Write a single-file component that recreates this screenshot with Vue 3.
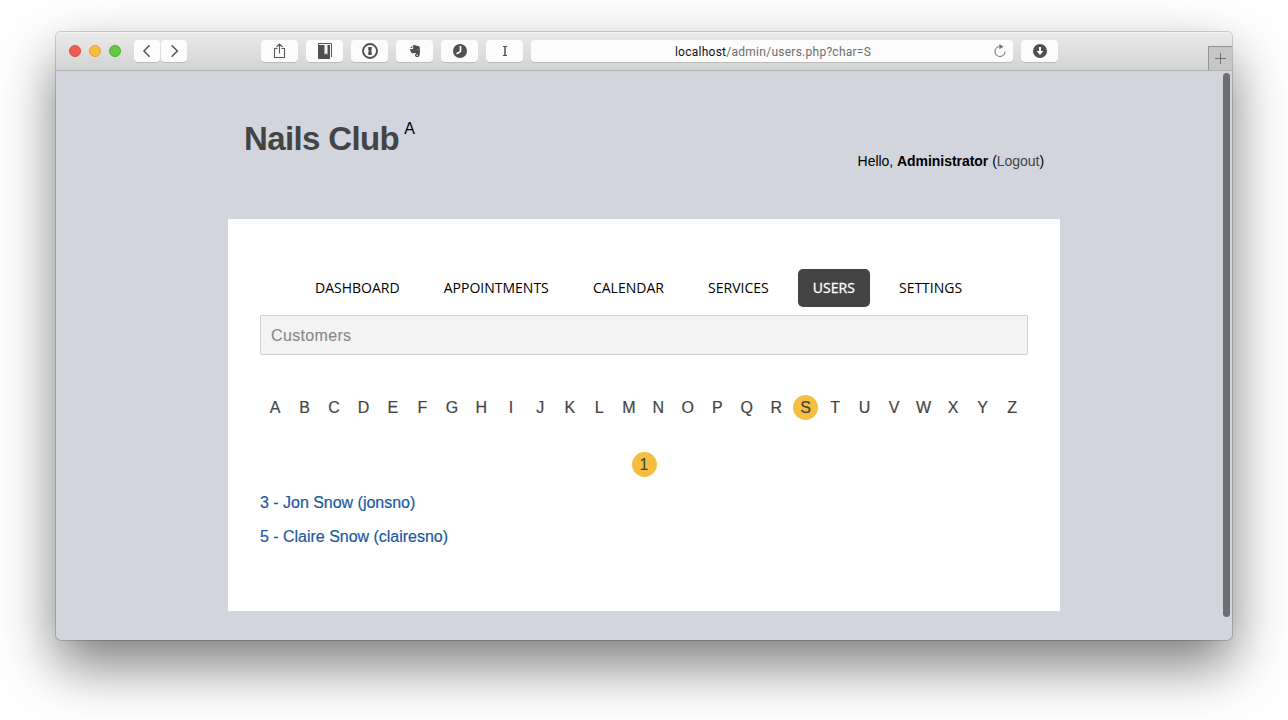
<script setup>
const nav = ['Dashboard', 'Appointments', 'Calendar', 'Services', 'Users', 'Settings']
const activeNav = 'Users'
const letters = 'ABCDEFGHIJKLMNOPQRSTUVWXYZ'.split('')
const activeLetter = 'S'
const users = [
  { id: 3, name: 'Jon Snow', login: 'jonsno' },
  { id: 5, name: 'Claire Snow', login: 'clairesno' },
]
</script>

<template>
  <div class="desktop">
    <div class="window">
      <header class="toolbar">
        <div class="lights">
          <span class="light red"></span>
          <span class="light yellow"></span>
          <span class="light green"></span>
        </div>
        <div class="history">
          <span class="btn arrow">
            <svg width="26" height="22" viewBox="0 0 26 22"><path d="M15.600 5.300 10 11l5.600 5.700" fill="none" stroke="#555" stroke-width="1.500" /></svg>
          </span>
          <span class="btn arrow">
            <svg width="26" height="22" viewBox="0 0 26 22"><path d="M10.700 5.300 16.300 11l-5.600 5.700" fill="none" stroke="#555" stroke-width="1.500" /></svg>
          </span>
        </div>
        <div class="tools">
          <span class="btn">
            <svg width="37" height="22" viewBox="0 0 37 22" fill="none" stroke="#5a5a5a" stroke-width="1.100">
              <path d="M16.500 8.500h-3v9h10v-9h-3M18.500 13.500V4M15.500 7l3-3 3 3" />
            </svg>
          </span>
          <span class="btn">
            <svg width="37" height="22" viewBox="0 0 37 22">
              <path d="M12 5h12v14H13.500a1.500 1.500 0 0 1-1.500-1.500z" fill="#505050" />
              <path d="M18.500 5h3v10l-1.500-1.700-1.500 1.700z" fill="#f4f4f4" />
              <path d="M12.500 5.500v-2h13V17" fill="none" stroke="#555" />
            </svg>
          </span>
          <span class="btn">
            <svg width="37" height="22" viewBox="0 0 37 22">
              <circle cx="19" cy="11" r="7" fill="none" stroke="#505050" stroke-width="1.900" />
              <path d="M17.300 7h3.400v3.300l-.8.700.8.700V15h-3.400v-3.300l.8-.7-.8-.7z" fill="#505050" />
            </svg>
          </span>
          <span class="btn">
            <svg width="37" height="22" viewBox="0 0 37 22">
              <path d="M17.200 5c1.500-.2 2.600 0 3 .7 1.200.1 2.900.2 3.200.8.700 1.600.7 5.500.3 8-.3 1.900-1 2.500-2.400 2.500-1.500 0-2.300-.8-2.300-1.800s.8-1.700 2.300-1.600v1c-.7 0-1 .2-1 .6s.3.600.8.600c.6 0 .8-.4.7-1.300-.3-1-2.300-.7-2.800-1.700-.3.600-1.500.7-2.600.4-1.400-.3-2.200-1.900-2.300-4.200h2.500c.4 0 .6-.2.600-.6z" fill="#505050" />
              <path d="M14.200 8 16.300 5.700V8z" fill="#505050" />
              <path d="M21 10c.3-.9 1.600-.8 1.600.3z" fill="#fff" />
            </svg>
          </span>
          <span class="btn">
            <svg width="37" height="22" viewBox="0 0 37 22">
              <circle cx="19" cy="11" r="7" fill="#505050" />
              <path d="M19.500 6v5.200q-1 1.300-4 2.500" fill="none" stroke="#fff" stroke-width="1.700" />
            </svg>
          </span>
          <span class="btn">
            <svg width="37" height="22" viewBox="0 0 37 22" fill="none" stroke="#505050">
              <path d="M17 6.500h4M17 15.500h4" /><path d="M19 6.500v9" stroke-width="1.500" />
            </svg>
          </span>
        </div>
        <div class="address">
          <span class="url"><b>localhost</b>/admin/users.php?char=S</span>
          <svg class="reload" width="14" height="16" viewBox="0 0 14 16">
            <path d="M6.500 3.500a5 5 0 1 0 5.500 5" fill="none" stroke="#777" stroke-width="1.100" />
            <path d="M6.300 1v5.200L10.500 3.700z" fill="#707070" />
          </svg>
        </div>
        <span class="btn download">
          <svg width="37" height="22" viewBox="0 0 37 22">
            <circle cx="19" cy="11" r="7" fill="#505050" />
            <path d="M18 7h2v4h2.400L19 15l-3.400-4H18z" fill="#fff" />
          </svg>
        </span>
        <span class="newtab">
          <svg width="23" height="23" viewBox="0 0 23 23"><path d="M6 11.500h11M11.500 6v11" stroke="#707070" /></svg>
        </span>
      </header>

      <main class="page">
        <div class="masthead">
          <div class="brand"><h1>Nails Club</h1><sup>A</sup></div>
          <p class="greeting">Hello, <strong>Administrator</strong> (<a>Logout</a>)</p>
        </div>
        <section class="panel">
          <nav class="nav">
            <a v-for="item in nav" :key="item" :class="{ active: item === activeNav }">{{ item.toUpperCase() }}</a>
          </nav>
          <div class="group"><span>Customers</span></div>
          <div class="letters">
            <a v-for="l in letters" :key="l"><span :class="{ dot: l === activeLetter }">{{ l }}</span></a>
          </div>
          <div class="pager"><span class="dot">1</span></div>
          <ul class="users">
            <li v-for="u in users" :key="u.id"><a>{{ u.id }} - {{ u.name }} ({{ u.login }})</a></li>
          </ul>
        </section>
        <span class="scrollbar"></span>
      </main>
    </div>
  </div>
</template>

<style>
body {
  background: #fff;
  overflow: hidden;
}
</style>

<style scoped>
.desktop {
  box-sizing: border-box;
  height: 720px;
  padding: 32px 56px 0;
  overflow: hidden;
  font-family: "Liberation Sans", Arial, sans-serif;
}
.window {
  width: 1176px;
  height: 608px;
  border-radius: 5px;
  background: #d2d5dd;
  box-shadow: 0 0 0 1px rgba(0, 0, 0, 0.17), 0 25px 55px rgba(0, 0, 0, 0.52);
}
.toolbar {
  box-sizing: border-box;
  display: flex;
  align-items: flex-start;
  height: 39px;
  padding: 8px 0 0 13px;
  border-bottom: 1px solid #b1b1b1;
  border-radius: 5px 5px 0 0;
  background: linear-gradient(#ebebeb, #d3d3d3);
  box-shadow: inset 0 1px #f5f5f5;
}
.lights {
  display: flex;
  gap: 8px;
  padding-top: 5px;
}
.light {
  box-sizing: border-box;
  width: 12px;
  height: 12px;
  border-radius: 50%;
}
.red { background: #ee5c54; border: 1px solid #dc4a45; }
.yellow { background: #f6be40; border: 1px solid #dfa23a; }
.green { background: #62cb43; border: 1px solid #4bad30; }
.history {
  display: flex;
  gap: 1px;
  margin-left: 13px;
}
.btn {
  width: 37px;
  height: 22px;
  border-radius: 4px;
  background: #fcfcfc;
  box-shadow: 0 1px rgba(0, 0, 0, 0.12);
}
.btn svg { display: block; }
.arrow { width: 26px; }
.tools {
  display: flex;
  gap: 8px;
  margin-left: 74px;
}
.address {
  display: flex;
  align-items: center;
  width: 482px;
  height: 22px;
  margin-left: 8px;
  border-radius: 4px;
  background: #fcfcfc;
  box-shadow: 0 1px rgba(0, 0, 0, 0.12);
}
.url {
  flex: 1;
  padding: 2px 0 0 22px;
  text-align: center;
  font: 12px/22px Roboto, sans-serif;
  letter-spacing: 0.26px;
  color: #6e6e6e;
}
.url b {
  font-weight: 400;
  color: #111;
}
.reload { margin-right: 6px; }
.download { margin-left: 8px; }
.newtab {
  box-sizing: border-box;
  width: 24px;
  height: 24px;
  margin: 6px 0 0 auto;
  border: solid #949494;
  border-width: 1px 0 0 1px;
  background: #c7c7c7;
}
.newtab svg { display: block; }
.page {
  position: relative;
  height: 569px;
}
.masthead {
  display: flex;
  justify-content: space-between;
  box-sizing: border-box;
  width: 832px;
  height: 148px;
  margin: 0 auto;
  padding: 0 16px;
}
.brand {
  display: flex;
  align-items: flex-start;
  padding-top: 48px;
}
h1 {
  margin: 0;
  font-size: 33px;
  line-height: 40px;
  letter-spacing: -0.62px;
  color: #444;
}
sup {
  margin-left: 5px;
  font-size: 16px;
  line-height: 19px;
  color: #000;
}
.greeting {
  margin: 81px 0 0;
  font-size: 14px;
  line-height: 18px;
  letter-spacing: -0.04px;
  color: #000;
}
.greeting a { color: #444; }
.panel {
  box-sizing: border-box;
  width: 832px;
  height: 392px;
  margin: 0 auto;
  padding: 50px 32px 0;
  background: #fff;
}
.nav {
  display: flex;
  gap: 14.150px;
  height: 38px;
  padding-left: 40px;
}
.nav a {
  padding: 0 15px;
  border-radius: 5px;
  font: 14px/38px "Open Sans", sans-serif;
  color: #000;
}
.nav .active {
  background: #444;
  color: #fff;
  -webkit-text-stroke: 0.3px #fff;
}
.group {
  box-sizing: border-box;
  height: 40px;
  margin-top: 8px;
  padding-left: 10px;
  border: 1px solid #d0d0d0;
  border-radius: 1px;
  background: #f3f3f3;
  font-size: 16px;
  line-height: 40px;
  letter-spacing: 0.34px;
  color: #888;
  -webkit-text-stroke: 0.1px;
}
.letters {
  display: grid;
  grid-template-columns: repeat(26, 1fr);
  width: 766.500px;
  height: 25px;
  margin: 40px 0 0 0.300px;
  font-size: 16px;
  line-height: 25px;
  color: #444;
  -webkit-text-stroke: 0.2px;
}
.letters a {
  display: flex;
  justify-content: center;
}
.dot {
  width: 25px;
  height: 25px;
  border-radius: 50%;
  background: #f6be40;
  text-align: center;
}
.pager {
  display: flex;
  justify-content: center;
  margin-top: 32px;
  font-size: 16px;
  line-height: 25px;
  color: #444;
  -webkit-text-stroke: 0.1px;
}
.users {
  margin: 9px 0 0;
  padding: 0;
  list-style: none;
  font-size: 16px;
  line-height: 34px;
  letter-spacing: -0.02px;
  color: #2058a3;
  -webkit-text-stroke: 0.2px;
}
.scrollbar {
  position: absolute;
  top: 2px;
  right: 2px;
  width: 7px;
  height: 544px;
  border-radius: 4px;
  background: #6d6f74;
}
</style>
